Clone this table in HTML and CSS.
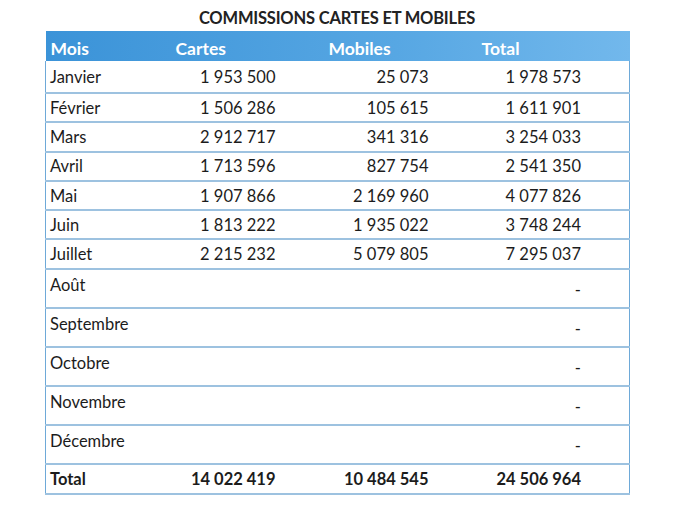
FILE: index.html
```html
<!DOCTYPE html>
<html lang="fr">
<head>
<meta charset="utf-8">
<title>Commissions cartes et mobiles</title>
<link rel="stylesheet" href="styles.css">
</head>
<body>
<div class="page">
  <h1 class="title">COMMISSIONS CARTES ET MOBILES</h1>
  <table class="grid">
    <colgroup>
      <col class="c-month"><col class="c-num"><col class="c-num"><col class="c-num">
    </colgroup>
    <thead>
      <tr class="head">
        <th>Mois</th><th>Cartes</th><th>Mobiles</th><th>Total</th>
      </tr>
    </thead>
    <tbody>
      <tr class="row first"><td class="m">Janvier</td><td class="n">1 953 500</td><td class="n">25 073</td><td class="n">1 978 573</td></tr>
      <tr class="row"><td class="m">Février</td><td class="n">1 506 286</td><td class="n">105 615</td><td class="n">1 611 901</td></tr>
      <tr class="row"><td class="m">Mars</td><td class="n">2 912 717</td><td class="n">341 316</td><td class="n">3 254 033</td></tr>
      <tr class="row"><td class="m">Avril</td><td class="n">1 713 596</td><td class="n">827 754</td><td class="n">2 541 350</td></tr>
      <tr class="row"><td class="m">Mai</td><td class="n">1 907 866</td><td class="n">2 169 960</td><td class="n">4 077 826</td></tr>
      <tr class="row"><td class="m">Juin</td><td class="n">1 813 222</td><td class="n">1 935 022</td><td class="n">3 748 244</td></tr>
      <tr class="row"><td class="m">Juillet</td><td class="n">2 215 232</td><td class="n">5 079 805</td><td class="n">7 295 037</td></tr>
      <tr class="row empty"><td class="m">Août</td><td class="n"></td><td class="n"></td><td class="n dash">-</td></tr>
      <tr class="row empty"><td class="m">Septembre</td><td class="n"></td><td class="n"></td><td class="n dash">-</td></tr>
      <tr class="row empty"><td class="m">Octobre</td><td class="n"></td><td class="n"></td><td class="n dash">-</td></tr>
      <tr class="row empty"><td class="m">Novembre</td><td class="n"></td><td class="n"></td><td class="n dash">-</td></tr>
      <tr class="row empty"><td class="m">Décembre</td><td class="n"></td><td class="n"></td><td class="n dash">-</td></tr>
    </tbody>
    <tfoot>
      <tr class="row total"><td class="m">Total</td><td class="n">14 022 419</td><td class="n">10 484 545</td><td class="n">24 506 964</td></tr>
    </tfoot>
  </table>
</div>
</body>
</html>
```
FILE: styles.css
```css
html, body {
  margin: 0;
  padding: 0;
  background: #ffffff;
}
body {
  font-family: Lato, "Liberation Sans", sans-serif;
  color: #1c1c1c;
}
.page {
  padding: 0 0 0 45px;
  width: 584px;
}
.title {
  margin: 0;
  height: 31px;
  padding-top: 8px;
  box-sizing: border-box;
  text-align: center;
  font-size: 16.5px;
  font-weight: 700;
  line-height: 20px;
  color: #222;
  letter-spacing: -0.2px;
}
.grid {
  width: 584px;
  border-collapse: collapse;
  table-layout: fixed;
  font-size: 16.5px;
}
.c-month { width: 125px; }
.c-num { width: 153px; }
.head th {
  height: 30px;
  padding: 4px 0 0 5px;
  box-sizing: border-box;
  text-align: left;
  color: #ffffff;
  font-weight: 700;
  font-size: 17.5px;
  vertical-align: middle;
}
.head {
  background: linear-gradient(to right, #3b93d8, #57a7e3 60%, #72b8ec);
}
.row td {
  height: 27.3px;
  border-bottom: 2px solid #9dc2e0;
  vertical-align: middle;
  padding: 0;
}
.first td {
  height: 31px;
}
.row td:first-child {
  border-left: 1.5px solid #6ea9d8;
}
.row td:last-child {
  border-right: 1.5px solid #6ea9d8;
}
.m {
  padding-left: 4px !important;
  text-align: left;
}
.n {
  text-align: right;
  padding-right: 48px !important;
}
.empty td {
  height: 30px;
  padding-bottom: 7px !important;
}
.empty td.dash {
  padding-bottom: 0 !important;
  padding-top: 3px !important;
}
.total td {
  font-weight: 700;
  height: 28px;
}
```
